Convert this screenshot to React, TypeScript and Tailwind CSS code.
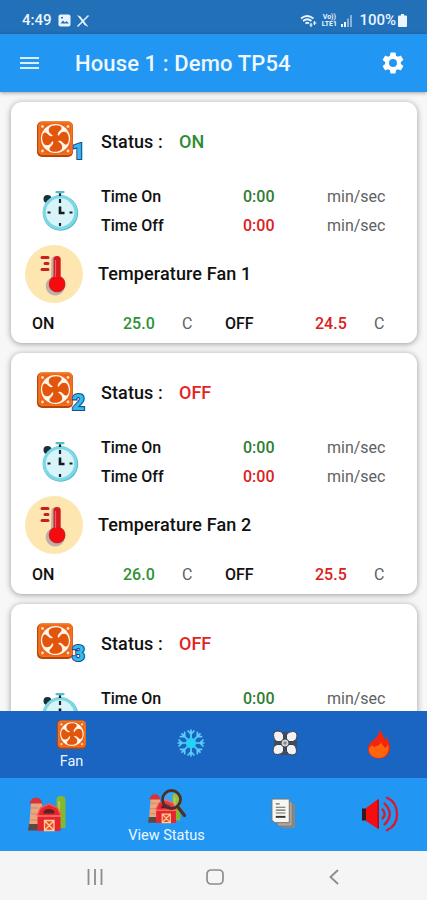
import type { ReactNode } from 'react';

const fans = [
  { id: 1, on: true, tempOn: '25.0', tempOff: '24.5' },
  { id: 2, on: false, tempOn: '26.0', tempOff: '25.5' },
  { id: 3, on: false, tempOn: '27.0', tempOff: '26.5' },
];

function FanIcon({ className }: { className?: string }) {
  return (
    <svg viewBox="0 0 36 36" className={className}>
      <rect x="0" y="0.5" width="36" height="35.5" rx="5" fill="#b8440c" />
      <rect x="1.2" y="0.5" width="34.5" height="33.5" rx="4.5" fill="#f5731d" />
      <rect x="3" y="2.5" width="30.5" height="30" rx="3" fill="#ea651a" />
      {[5.5, 31].map((x) =>
        [5.5, 30].map((y) => <circle key={`${x}-${y}`} cx={x} cy={y} r="1.4" fill="#ffe0c4" />)
      )}
      <circle cx="18.5" cy="17.5" r="14.6" fill="#fff6ec" />
      {[0, 90, 180, 270].map((angle) => (
        <path
          key={angle}
          transform={`rotate(${angle} 18.5 17.5)`}
          d="M17 14.500C12.500 13.500 10.500 9.500 12.500 6.500C15.500 3.300 23.500 3.500 24.500 6.500C25 9.500 21 9.500 20.500 14.500Z"
          fill="#e2550d"
        />
      ))}
      <circle cx="18.5" cy="17.5" r="4" fill="#e2550d" />
    </svg>
  );
}

function StopwatchIcon() {
  return (
    <svg viewBox="0 0 38 42" className="h-[42px] w-[38px]">
      <circle cx="6.500" cy="9" r="4" fill="#173039" />
      <path d="M15.500 2.200h7M19 2v5" stroke="#55bccb" strokeWidth="2.200" strokeLinecap="round" />
      <circle cx="19.500" cy="23" r="17.700" fill="#4ab5c7" />
      <circle cx="19" cy="22.500" r="17.400" fill="#7dd8e5" />
      <circle cx="19" cy="22.500" r="14.200" fill="#d8f4f9" />
      <path d="M19 3.500v2.500M19 9v4M19 33v3M6.500 22.500h3M28.500 22.500h3" stroke="#17262d" strokeWidth="2.200" />
      <path d="M19 16.500v6.500h4.500" fill="none" stroke="#101c22" strokeWidth="2.600" />
    </svg>
  );
}

function ThermometerIcon() {
  return (
    <svg viewBox="0 0 58 58" className="size-[58px]">
      <circle cx="29" cy="29" r="29" fill="#fde6b0" />
      <path d="M26.500 13.500a4.300 4.300 0 0 1 8 1.500v17.500a9.500 9.500 0 1 1-8.500 0z" fill="#bcb0a8" />
      <path d="M28.500 14.500a3.600 3.600 0 0 1 7.200 0v17a8.300 8.300 0 1 1-7.200 0z" fill="#d81920" />
      <circle cx="32" cy="39" r="7" fill="#f60a0e" />
      <path d="M30.500 15v17" stroke="#f35d5d" strokeWidth="1.200" />
      <path d="M17 12.500h6M20 18.500h3M17 24.500h6" stroke="#c62222" strokeWidth="3" strokeLinecap="round" />
    </svg>
  );
}

function SnowflakeIcon() {
  return (
    <svg viewBox="0 0 28 28" className="mb-[3px] size-7">
      <g fill="none" stroke="#5cd0fa" strokeWidth="1.700" strokeLinecap="round">
        {[0, 45, 90, 135, 180, 225, 270, 315].map((angle) => (
          <path key={angle} transform={`rotate(${angle} 14 14)`} d="M14 14V1.200M11 2L14 5l3-3" />
        ))}
      </g>
      <circle cx="14" cy="14" r="5.200" fill="#22d3f4" />
    </svg>
  );
}

function BlowerIcon() {
  return (
    <svg viewBox="0 0 28 28" className="mb-1 size-7">
      <rect x="3" y="3" width="23" height="23" rx="4" fill="#3e4d63" />
      {[0, 90, 180, 270].map((angle) => (
        <path
          key={angle}
          transform={`rotate(${angle} 14 14)`}
          d="M12.500 12.500L6 12.500Q2.500 11 2.500 6.500Q2.500 2 7 2Q11.500 2 12.500 6Z"
          fill="#f2f2f2"
          stroke="#39404c"
          strokeWidth="1"
        />
      ))}
      <circle cx="14" cy="14" r="4" fill="#d4d4d4" stroke="#4a4e55" strokeWidth="1" />
      <circle cx="14" cy="14" r="1.700" fill="#888" />
    </svg>
  );
}

function FlameIcon() {
  return (
    <svg viewBox="0 0 24 30" className="mb-px h-[30px] w-6">
      <path
        d="M12.500 0C14 4 18 7 18 12C19.300 10.500 19.300 8.500 19 6.500C20 9 21 10.500 21.500 12C22 15 23.500 16.500 23 20C22 26 18 29.500 12 29.500C5.500 29.500 1 25.500 1 20C1 16 3.500 13.500 6 11.500C10 8.500 12.500 5.500 12.500 0Z"
        fill="#f3260c"
      />
      <path
        d="M14 13C15 16 17 17 18 19C20 17.500 20.500 16.500 21 15.500C23 21.500 19.500 29 12 29C5 29 1.500 24.500 2 20C2.500 18 4 17 5 16C6 17 6 17.500 7 18C11 16.500 14 15.500 14 13Z"
        fill="#ff630b"
      />
    </svg>
  );
}

function BarnShapes() {
  return (
    <>
      <path d="M28.500 4Q28.500 0 33 0Q37.500 0 37.500 4v28h-9z" fill="#84b82f" />
      <path d="M31 5v26" stroke="#a9cf45" strokeWidth="2" />
      <path d="M3 7h11v26H1z" fill="#e8a781" />
      <path d="M3 12h7M3 18h7M2.500 24h7" stroke="#d2855f" strokeWidth="1" />
      <path d="M1.500 7.500Q3 1.500 8 1.500Q13 1.500 14.500 7.500Z" fill="#d5343a" />
      <path d="M1 28h9v6.500H0z" fill="#5a4a42" />
      <path d="M9.500 35V19l3-7 8.500-4 8.500 4 3 7v16z" fill="#e8252e" />
      <path d="M9 20l3.500-8L21 8l8.500 4 3.500 8" fill="none" stroke="#f9564e" strokeWidth="1.400" />
      <path d="M15.500 16q1-3 5.500-3t5.500 3v1.500H15.500z" fill="#5b2021" />
      <path d="M9 20h24" stroke="#ffa286" strokeWidth="1" />
      <path d="M16.500 24.500h9.500v10h-9.500zM16.500 24.500l9.500 10M26 24.500l-9.500 10" fill="#ee4a2a" stroke="#ffcf96" strokeWidth="1.300" />
    </>
  );
}

function BarnIcon() {
  return (
    <svg viewBox="0 0 38 36" className="mb-px h-9 w-[38px]">
      <BarnShapes />
    </svg>
  );
}

function ViewStatusIcon() {
  return (
    <svg viewBox="0 0 40 36" className="mt-[5px] mb-px h-9 w-10">
      <g transform="translate(1 4) scale(.86)">
        <BarnShapes />
      </g>
      <circle cx="24.500" cy="10.500" r="9" fill="#ffffff" fillOpacity=".12" stroke="#4a3028" strokeWidth="2.800" />
      <path d="M30.500 17.500l7 9" stroke="#4a3028" strokeWidth="3.200" strokeLinecap="round" />
    </svg>
  );
}

function PagesIcon() {
  return (
    <svg viewBox="0 0 26 32" className="mr-0.5 mb-[3px] h-[31px] w-[25px]">
      <path d="M7 6h18v25H11z" fill="#8a8782" />
      <path d="M4 4h18v25H7z" fill="#aaa69f" stroke="#77736c" strokeWidth=".6" />
      <path d="M1 1h18v24.500H4L1 23z" fill="#f6f6f3" stroke="#77736c" strokeWidth="1" />
      <path d="M5 6h4M5 9.500h10M5 12.500h10M5 15.500h10" stroke="#666" strokeWidth="1.200" />
      <path d="M5 19.500h10" stroke="#333" strokeWidth="2" />
    </svg>
  );
}

function SpeakerIcon() {
  return (
    <svg viewBox="0 0 38 36" className="mb-px ml-1 h-9 w-[38px]">
      <path d="M1 12.500h5v12H1z" fill="#35191d" />
      <path d="M5 12l13-9.500v31L5 25z" fill="#f50d12" />
      <path d="M17.200 4v28" stroke="#b70b14" strokeWidth="1.600" />
      <g fill="none" stroke="#dc1827" strokeWidth="2.300" strokeLinecap="round">
        <path d="M21.500 13.500q4.500 4.500 0 9" />
        <path d="M23.500 7.500q10.500 10.500 0 21" />
        <path d="M26 1.800q10 4.500 10 16.200t-10 16.200" />
      </g>
    </svg>
  );
}

function StatusBar() {
  return (
    <div className="flex h-[34px] shrink-0 items-center justify-between bg-[#2270b8] pt-[7px] pr-5 pl-[22px] text-[15px] font-medium text-[#eaf5ff]">
      <div className="flex items-center gap-[7px]">
        <span>4:49</span>
        <svg viewBox="0 0 13 13" className="-ml-px size-[13px]">
          <rect x=".5" y=".5" width="12" height="12" rx="2" fill="currentColor" />
          <path d="M2.500 9.500l2.500-3 2 2 1.500-1.500 2.500 2.500z" fill="#2270b8" />
          <circle cx="4" cy="3.800" r="1" fill="#2270b8" />
        </svg>
        <svg viewBox="0 0 14 14" className="-ml-0.5 size-[14px]">
          <path d="M1 1l3.500 1.500 8 10.500-4-2z" fill="currentColor" />
          <path d="M12.500 1.500L1.500 12.500" stroke="currentColor" strokeWidth="1.500" />
        </svg>
      </div>
      <div className="flex items-center gap-1">
        <svg viewBox="0 0 17 14" className="h-[14px] w-[17px]" fill="none" stroke="currentColor" strokeWidth="1.700">
          <path d="M1 4.500q6-5 12.500 0M3 7q4.500-3.500 8.500 0M5.500 9.500q2-1.500 3.500 0" />
          <path d="M11 9v4M14.500 7v4M9.500 11h3M13 9h3.500" strokeWidth="1.200" />
        </svg>
        <div className="flex w-4 flex-col items-center text-[7px] leading-[7px] font-bold">
          <span>Vo))</span>
          <span>LTE1</span>
        </div>
        <svg viewBox="0 0 11 12" className="h-3 w-[11px]" fill="currentColor">
          <path d="M0 9h2v3H0zM3 7h2v5H3z" />
          <path d="M6 3.500h2V12H6zM9 0h2v12H9z" opacity=".5" />
        </svg>
        <span className="ml-[3px]">100%</span>
        <svg viewBox="0 0 9 13" className="-ml-0.5 h-[13px] w-[9px]" fill="currentColor">
          <path d="M3 0h3v1.500h2q1 0 1 1V12q0 1-1 1H1q-1 0-1-1V2.500q0-1 1-1h2z" />
        </svg>
      </div>
    </div>
  );
}

function AppBar() {
  return (
    <header className="z-10 flex h-[58px] shrink-0 items-center bg-[#2196f3] pr-[23px] pl-5 text-white shadow-[0_1px_4px_rgba(0,0,0,0.35)]">
      <button aria-label="Menu" className="flex w-[19px] flex-col gap-[3px]">
        <span className="h-[2px] w-full bg-[#d9eeff]" />
        <span className="h-[2px] w-full bg-[#d9eeff]" />
        <span className="h-[2px] w-full bg-[#d9eeff]" />
      </button>
      <h1 className="ml-9 flex-1 text-[22px] font-medium tracking-[0.12px] text-[#eef7ff]">House 1 : Demo TP54</h1>
      <button aria-label="Settings">
        <svg viewBox="2 2 20 20" className="size-[22px]" fill="currentColor">
          <path d="M19.140 12.940c.040-.3.060-.61.060-.94s-.020-.64-.070-.94l2.030-1.580a.49.49 0 0 0 .12-.61l-1.920-3.320a.49.49 0 0 0-.59-.22l-2.390.96a7 7 0 0 0-1.620-.94l-.36-2.540a.48.48 0 0 0-.48-.41h-3.840a.47.47 0 0 0-.47.41l-.36 2.540a7.300 7.300 0 0 0-1.620.94l-2.390-.96a.48.48 0 0 0-.59.22L2.740 8.870a.48.48 0 0 0 .12.61l2.030 1.580a6 6 0 0 0-.02 1.880l-2.030 1.580a.49.49 0 0 0-.12.61l1.920 3.320c.12.22.37.290.59.220l2.390-.96q.75.57 1.620.94l.36 2.540c.05.24.24.410.48.410h3.840c.24 0 .44-.17.47-.41l.36-2.540a7 7 0 0 0 1.620-.94l2.390.96c.22.080.47 0 .59-.22l1.920-3.320a.47.47 0 0 0-.12-.61zM12 15.600A3.600 3.600 0 1 1 12 8.400a3.600 3.600 0 0 1 0 7.200" />
        </svg>
      </button>
    </header>
  );
}

function TimeRow({ label, color }: { label: string; color: string }) {
  return (
    <div className="flex h-[29px] items-center text-base">
      <span className="w-[142px] font-medium">{label}</span>
      <span className={`w-[84px] font-medium ${color}`}>0:00</span>
      <span className="text-[#616161]">min/sec</span>
    </div>
  );
}

function FanCard({ fan }: { fan: (typeof fans)[number] }) {
  return (
    <section className="h-[241px] shrink-0 rounded-[11px] bg-white text-[#111] shadow-[0_1px_6px_rgba(0,0,0,0.38)]">
      <div className="flex h-[78px] items-center pt-px pl-[26px]">
        <div className="relative mr-7 -mt-[5px] size-9">
          <FanIcon className="size-9" />
          <svg viewBox="0 0 18 24" className="absolute top-[18px] left-[34px] h-6 w-[18px] overflow-visible">
            <text
              x="1"
              y="20"
              className="text-[22px] font-black"
              fill="#35b9ef"
              stroke="#1c4c80"
              strokeWidth="2.200"
              paintOrder="stroke"
            >
              {fan.id}
            </text>
          </svg>
        </div>
        <span className="w-[78px] text-lg font-medium tracking-[0.1px]">Status :</span>
        <span className={`text-lg font-medium ${fan.on ? 'text-[#2e8b32]' : 'text-[#e5231f]'}`}>
          {fan.on ? 'ON' : 'OFF'}
        </span>
      </div>
      <div className="flex h-[62px] items-center pl-[30px]">
        <StopwatchIcon />
        <div className="ml-[22px]">
          <TimeRow label="Time On" color="text-[#2e7d32]" />
          <TimeRow label="Time Off" color="text-[#dc2020]" />
        </div>
      </div>
      <div className="flex h-[64px] items-center pl-[14px]">
        <ThermometerIcon />
        <span className="ml-[15px] text-lg font-medium tracking-[0.12px]">Temperature Fan {fan.id}</span>
      </div>
      <div className="flex h-[35px] items-center pl-[21px] text-base font-medium">
        <span className="w-[91px]">ON</span>
        <span className="w-[59px] text-[#2f9135]">{fan.tempOn}</span>
        <span className="w-[43px] font-normal text-[#616161]">C</span>
        <span className="w-[90px]">OFF</span>
        <span className="w-[59px] text-[#dc2020]">{fan.tempOff}</span>
        <span className="font-normal text-[#616161]">C</span>
      </div>
    </section>
  );
}

function NavItem({ label, children }: { label?: string; children: ReactNode }) {
  return (
    <button className="flex flex-col items-center justify-center text-[14.5px] leading-[18px] text-[#edf6ff]">
      {children}
      {label && <span className="pt-px">{label}</span>}
    </button>
  );
}

export default function App() {
  return (
    <div className="flex h-[900px] w-[427px] flex-col overflow-hidden bg-[#f7f7f7] font-['Roboto',sans-serif]">
      <StatusBar />
      <AppBar />
      <main className="flex min-h-0 flex-1 flex-col gap-[10px] overflow-hidden px-[10px] pt-[10px] pl-[11px]">
        {fans.map((fan) => (
          <FanCard key={fan.id} fan={fan} />
        ))}
      </main>

      <nav className="z-10 grid h-[67px] shrink-0 grid-cols-[143px_96px_92px_96px] bg-[#1a65c2]">
        <NavItem label="Fan">
          <FanIcon className="mt-0.5 mb-[3px] size-[29px]" />
        </NavItem>
        <NavItem>
          <SnowflakeIcon />
        </NavItem>
        <NavItem>
          <BlowerIcon />
        </NavItem>
        <NavItem>
          <FlameIcon />
        </NavItem>
      </nav>
      <nav className="z-10 grid h-[73px] shrink-0 grid-cols-[94px_145px_90px_98px] bg-[#2196f3]">
        <NavItem>
          <BarnIcon />
        </NavItem>
        <NavItem label="View Status">
          <ViewStatusIcon />
        </NavItem>
        <NavItem>
          <PagesIcon />
        </NavItem>
        <NavItem>
          <SpeakerIcon />
        </NavItem>
      </nav>

      {/* Android system buttons */}
      <div className="flex h-[49px] shrink-0 items-center bg-[#f5f5f5] pt-[3px] pl-[87px] text-[#8c8c8c]">
        <svg viewBox="0 0 16 16" className="size-4" stroke="currentColor" strokeWidth="1.800">
          <path d="M1.500 0v16M8 0v16M14.500 0v16" />
        </svg>
        <svg viewBox="0 0 18 16" className="ml-[103px] h-4 w-[18px]" fill="none" stroke="currentColor" strokeWidth="1.700">
          <rect x="1" y="1" width="16" height="14" rx="4" />
        </svg>
        <svg viewBox="0 0 10 16" className="ml-[105px] h-4 w-[10px]" fill="none" stroke="currentColor" strokeWidth="1.800">
          <path d="M9 1L1.500 8 9 15" />
        </svg>
      </div>
    </div>
  );
}
